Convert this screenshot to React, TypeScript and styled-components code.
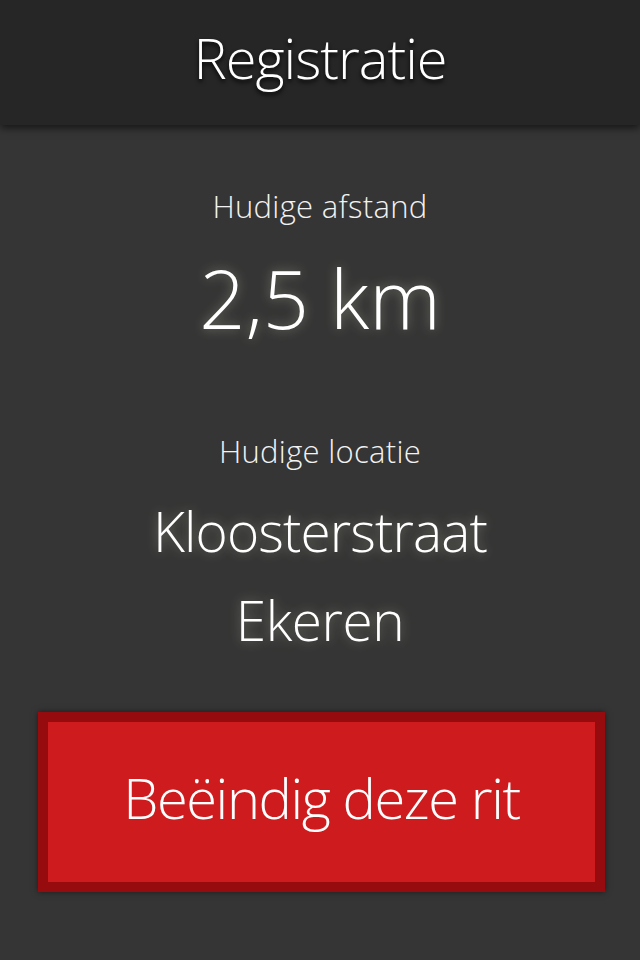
import React from "react";
import styled, { createGlobalStyle } from "styled-components";

const Global = createGlobalStyle`
  html, body { margin: 0; padding: 0; background: #353535; }
  body { font-family: "Open Sans", "Noto Sans", sans-serif; color: #fff; }
  * { box-sizing: border-box; }
`;

const Screen = styled.div`
  width: 640px;
  height: 960px;
  background: #353535;
  display: flex;
  flex-direction: column;
  overflow: hidden;
`;

const Header = styled.header`
  height: 125px;
  flex: none;
  background: #262626;
  display: flex;
  align-items: center;
  justify-content: center;
  padding-bottom: 12px;
  box-shadow: 0 3px 8px rgba(0, 0, 0, 0.6);
  position: relative;
  z-index: 1;
`;

const Title = styled.h1`
  margin: 0;
  font-size: 56px;
  line-height: 56px;
  font-weight: 300;
  letter-spacing: -1px;
  color: #fff;
  text-shadow: 0 3px 4px rgba(0, 0, 0, 0.85);
`;

const Content = styled.main`
  display: flex;
  flex-direction: column;
  align-items: center;
  padding-top: 66px;
`;

const Label = styled.div<{ $gap: number }>`
  margin-top: ${(p) => p.$gap}px;
  font-size: 31px;
  line-height: 31px;
  font-weight: 300;
  letter-spacing: 0.3px;
  color: #f2f2f2;
`;

const Value = styled.div<{ $size: number; $gap: number; $track: number }>`
  margin-top: ${(p) => p.$gap}px;
  font-size: ${(p) => p.$size}px;
  line-height: ${(p) => p.$size}px;
  letter-spacing: ${(p) => p.$track}px;
  font-weight: 300;
  color: #fff;
  text-shadow: 0 0 12px rgba(255, 255, 220, 0.35);
`;

const EndButton = styled.button`
  margin: 65px 35px 0 38px;
  align-self: stretch;
  height: 180px;
  background: #ce1c1e;
  border: 10px solid #960b0e;
  box-shadow: 0 0 6px rgba(0, 0, 0, 0.5);
  color: #fff;
  font-family: "Open Sans", "Noto Sans", sans-serif;
  font-size: 56px;
  font-weight: 300;
  letter-spacing: -1.4px;
  display: flex;
  align-items: center;
  justify-content: center;
  padding: 0 0 10px 0;
  cursor: pointer;
`;

export default function App() {
  return (
    <>
      <Global />
      <Screen>
        <Header>
          <Title>Registratie</Title>
        </Header>
        <Content>
          <Label $gap={0}>Hudige afstand</Label>
          <Value $size={81} $gap={35} $track={0}>2,5 km</Value>
          <Label $gap={98}>Hudige locatie</Label>
          <Value $size={55} $gap={36} $track={-0.9}>Kloosterstraat</Value>
          <Value $size={55} $gap={34} $track={-0.5}>Ekeren</Value>
          <EndButton>Beëindig deze rit</EndButton>
        </Content>
      </Screen>
    </>
  );
}
